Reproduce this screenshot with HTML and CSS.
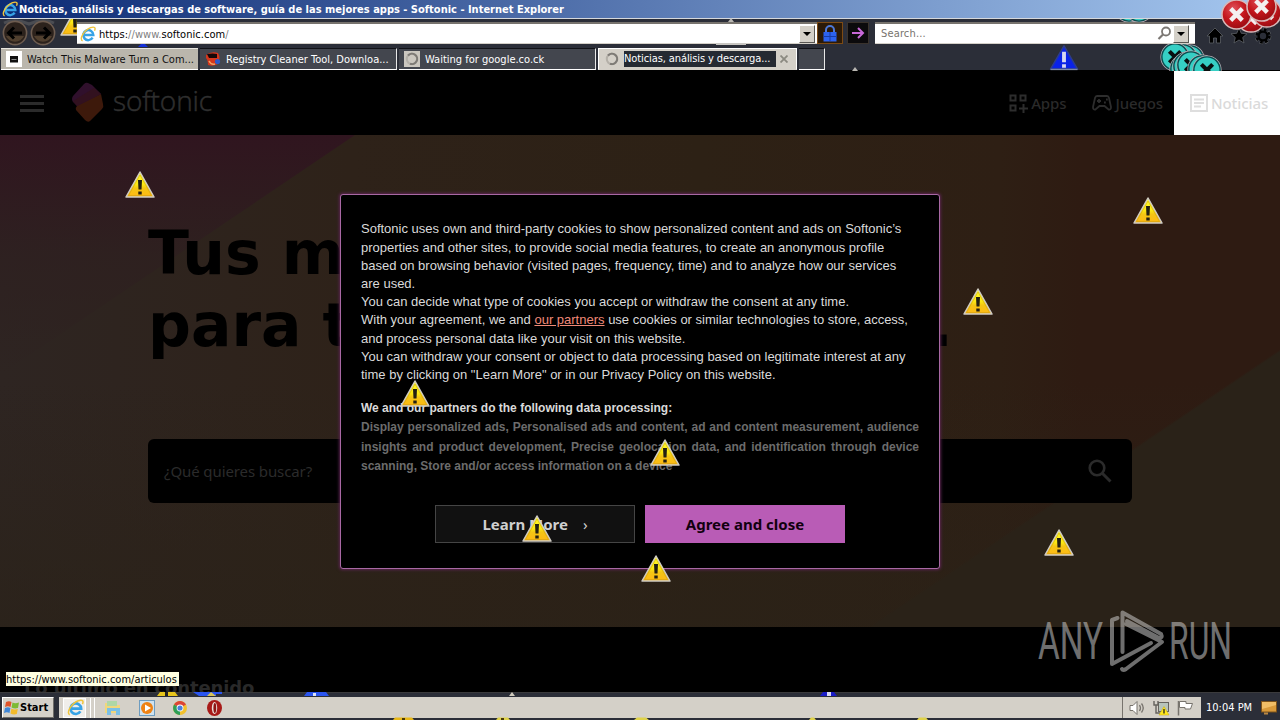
FILE: index.html
```html
<!DOCTYPE html>
<html lang="es">
<head>
    <meta charset="UTF-8">
    <meta name="viewport" content="width=device-width, initial-scale=1.0">
    <title>Noticias, análisis y descargas de software, guía de las mejores apps - Softonic</title>
    <link rel="stylesheet" href="styles.css">
</head>
<body>
    <!-- shared icons -->
    <svg class="defs" width="0" height="0">
        <defs>
            <linearGradient id="yellow" x1="0" y1="0" x2="0" y2="1">
                <stop offset="0" stop-color="#ffff30"/>
                <stop offset="0.5" stop-color="#fbe814"/>
                <stop offset="0.65" stop-color="#f4c614"/>
                <stop offset="1" stop-color="#ffb814"/>
            </linearGradient>
            <radialGradient id="red" cx="0.4" cy="0.3" r="0.8">
                <stop offset="0" stop-color="#e0525a"/>
                <stop offset="0.5" stop-color="#c4161c"/>
                <stop offset="1" stop-color="#8e0a10"/>
            </radialGradient>
            <symbol id="warn" viewBox="0 0 30 27">
                <path d="M15 1 L29 26 H1 Z" fill="url(#yellow)" stroke="#cfcbc3" stroke-width="1.5" stroke-linejoin="round"/>
                <path d="M15 4 L26.5 24.500 H3.500 Z" fill="none" stroke="#c99a10" stroke-width="0.5"/>
                <path d="M13 9 h4 l-.5 9.500 h-3 Z M13.300 20.500 h3.400 v3 h-3.400 Z" fill="#221f12"/>
            </symbol>
            <symbol id="warn-blue" viewBox="0 0 30 27">
                <path d="M15 1 L29 25 H1 Z" fill="#0a22e8" stroke="#2c3c8c" stroke-width="1.6" stroke-linejoin="round"/>
                <path d="M1 25.4 H29" stroke="#7c88a8" stroke-width="1.4"/>
                <path d="M13 7 h4 v11 h-4 Z M13 20 h4 v3.5 h-4 Z" fill="#d8d8f0"/>
            </symbol>
            <symbol id="error" viewBox="0 0 32 32">
                <circle cx="16" cy="16" r="15" fill="url(#red)" stroke="#d9b9b9" stroke-width="1.6"/>
                <path d="M10 10 L22 22 M22 10 L10 22" stroke="#f4f0f0" stroke-width="4.6"/>
            </symbol>
            <symbol id="error-teal" viewBox="0 0 32 32">
                <circle cx="16" cy="16" r="15" fill="#36cfc4" stroke="#b9a7ae" stroke-width="1.2"/>
                <circle cx="16" cy="16" r="14" fill="none" stroke="#0c4b4e" stroke-width="1.5"/>
                <path d="M10 10 L22 22 M22 10 L10 22" stroke="#0a1010" stroke-width="4.4"/>
            </symbol>
            <symbol id="ie" viewBox="0 0 16 16">
                <path d="M3.500 9 H13.300 A5 5 0 1 0 12.600 11.700" fill="none" stroke="#37a3e6" stroke-width="2.500"/>
                <path d="M2.600 14.800 C-1 13.500 3.500 4.600 10.600 1.700 C14.400 .2 16 1.800 14.500 4.800" fill="none" stroke="#efc53c" stroke-width="1.400"/>
            </symbol>
            <symbol id="spinner" viewBox="0 0 16 16">
                <circle cx="8" cy="8" r="5.2" fill="none" stroke="#b4b0a8" stroke-width="2"/>
                <path d="M4 4.500 a5.200 5.200 0 1 1 2 8.200" fill="none" stroke="#7e7b76" stroke-width="2"/>
            </symbol>
        </defs>
    </svg>

    <div class="screen">
        <div class="titlebar">
            <svg class="title-icon" viewBox="0 0 16 16"><use href="#ie"/></svg>
            <span class="title">Noticias, análisis y descargas de software, guía de las mejores apps - Softonic - Internet Explorer</span>
        </div>

        <div class="toolbar">
            <svg class="nav-buttons" width="58" height="29" viewBox="0 0 58 29">
                <path d="M4 4 Q15 -1 29 5 Q43 -1 54 4" fill="none" stroke="#4a4c52" stroke-width="3"/>
                <circle cx="15" cy="14" r="11.6" fill="#2c221c" stroke="#6d5c50" stroke-width="1.6"/>
                <circle cx="43" cy="14" r="11.6" fill="#2c221c" stroke="#6d5c50" stroke-width="1.6"/>
                <path d="M6 17 a10 10 0 0 0 18 0 Z M34 17 a10 10 0 0 0 18 0 Z" fill="#51402f"/>
                <path d="M22 14 H9 M14 8.5 L8.5 14 L14 19.5 M36 14 H49 M44 8.5 L49.5 14 L44 19.5" fill="none" stroke="#000" stroke-width="3"/>
            </svg>
            <div class="address">
                <svg class="icon16" viewBox="0 0 16 16"><use href="#ie"/></svg>
                <span class="url">https:<i>//www.</i>softonic.com<i>/</i></span>
                <span class="drop"></span>
            </div>
            <div class="tool-button lock">
                <svg width="14" height="17" viewBox="0 0 14 17">
                    <path d="M3 8 V5 a4 4 0 0 1 8 0 V8" fill="none" stroke="#4d78d8" stroke-width="2"/>
                    <rect x="0.5" y="7" width="13" height="9.5" fill="#2c63f0"/>
                    <path d="M0 11.5 H14 M7 7 V16" stroke="#173ca8"/>
                </svg>
            </div>
            <div class="tool-button go">
                <svg width="14" height="14" viewBox="0 0 14 14"><path d="M1 7 H12 M7 2 L12 7 L7 12" fill="none" stroke="#c868d8" stroke-width="2"/></svg>
            </div>
            <div class="search">
                <span>Search...</span>
                <svg width="15" height="15" viewBox="0 0 15 15"><circle cx="9" cy="5.5" r="4" fill="none" stroke="#7b7773" stroke-width="1.8"/><path d="M6 8.5 L1.5 13" stroke="#7b7773" stroke-width="2.2"/></svg>
                <span class="drop"></span>
            </div>
            <svg class="window-tools" width="66" height="18" viewBox="0 0 66 18">
                <g fill="#000" stroke="#5c5f64" stroke-width="0.8">
                    <path d="M9 1 L17 9 H14.5 V16 H10.5 V11 H7.5 V16 H3.5 V9 H1 Z"/>
                    <path d="M33 1 L35.3 6.3 L41 6.8 L36.7 10.5 L38 16 L33 13 L28 16 L29.300 10.500 L25 6.800 L30.700 6.300 Z"/>
                </g>
                <circle cx="57" cy="9" r="6.800" fill="none" stroke="#5c5f64" stroke-width="3" stroke-dasharray="3.400 1.940"/>
                <circle cx="57" cy="9" r="6.200" fill="none" stroke="#000" stroke-width="3" stroke-dasharray="2.600 2.270"/>
                <circle cx="57" cy="9" r="4.400" fill="none" stroke="#000" stroke-width="2.400"/>
            </svg>
        </div>

        <div class="tabs">
            <div class="tab light">
                <svg class="icon16" viewBox="0 0 16 16"><rect width="16" height="16" fill="#fff"/><rect x="4" y="5" width="8" height="6.500" fill="#111"/><path d="M5.500 8.500 h5" stroke="#888"/></svg>
                <span>Watch This Malware Turn a Com...</span>
            </div>
            <div class="tab dark">
                <svg class="icon16" viewBox="0 0 16 16"><path d="M1 4 Q6 0 13 2 Q16 7 13 13 Q8 16 3 14 Q3 9 1 7 Z" fill="#d4361c"/><path d="M2 3 Q8 2 12 3 V7 H4 Z" fill="#160808"/><path d="M4 10 q2 4 6 3" stroke="#f0a060" stroke-width="1.500" fill="none"/><circle cx="12.500" cy="10.500" r="2.600" fill="#2c58c8"/></svg>
                <span>Registry Cleaner Tool, Downloa...</span>
            </div>
            <div class="tab dark">
                <svg class="icon16 boxed" viewBox="0 0 16 16"><use href="#spinner"/></svg>
                <span>Waiting for google.co.ck</span>
            </div>
            <div class="tab active">
                <svg class="icon16" viewBox="0 0 16 16"><use href="#spinner"/></svg>
                <span class="active-title">Noticias, análisis y descarga...</span>
                <svg class="close" width="8" height="8" viewBox="0 0 8 8"><path d="M0.500 0.500 L7.500 7.500 M7.500 0.500 L0.500 7.500" stroke="#8b8980" stroke-width="1.800"/></svg>
            </div>
            <div class="tab dark new"></div>
        </div>

        <div class="page">
            <div class="header">
                <div class="menu"><b></b><b></b><b></b></div>
                <svg class="logo" width="34" height="42" viewBox="0 0 34 42">
                    <path d="M17 1 Q15 0 13 2 L2 14 Q0 17 2 20 L8 26 L30 12 L21 3 Z" fill="#30102c"/>
                    <path d="M30 12 L32 22 Q33 25 31 27 L19 39 Q17 41 14 38 L5 28 Q4 26 6 24 Z" fill="#3d190b"/>
                    <path d="M30 12 L6 24 L2 19 L23 6 Z" fill="#32111f"/>
                </svg>
                <span class="brand">softonic</span>
                <div class="nav">
                    <a class="apps">
                        <svg width="19" height="19" viewBox="0 0 19 19" fill="none" stroke="#2d2d2d" stroke-width="2"><path d="M1.500 1.500 h5 v5 h-5 Z M11.500 1.500 h5 v5 h-5 Z M1.500 11.500 h5 v5 h-5 Z M14.500 10 v9 M10 14.500 h9"/></svg>
                        <span>Apps</span>
                    </a>
                    <a class="games">
                        <svg width="20" height="16" viewBox="0 0 20 16" fill="none" stroke="#2d2d2d" stroke-width="1.800"><path d="M5 1 H15 Q16.500 1 17 3 L19 12 Q19 15 16.500 14.500 L12.500 11 H7.500 L3.500 14.500 Q1 15 1 12 L3 3 Q3.500 1 5 1 Z M7 4 V8 M5 6 H9 M12 7.500 h1.800 M14 4.500 h1.800"/></svg>
                        <span>Juegos</span>
                    </a>
                    <a class="news">
                        <svg width="18" height="18" viewBox="0 0 18 18" fill="none" stroke="#dedede" stroke-width="2"><path d="M1 1 H17 V17 H1 Z M4 5.500 H14 M4 9 H14 M4 12.500 H11"/></svg>
                        <span>Noticias</span>
                    </a>
                </div>
            </div>

            <div class="hero">
                <h1>Tus m<br>para t<span>.</span></h1>
                <div class="hero-search">
                    <span>¿Qué quieres buscar?</span>
                    <svg width="24" height="24" viewBox="0 0 24 24" fill="none" stroke="#2b2b2b"><circle cx="9" cy="9" r="7.300" stroke-width="2.600"/><path d="M14 14 L22.500 22.500" stroke-width="3"/></svg>
                </div>
            </div>
            <div class="latest"><h2>Lo último en contenido</h2></div>

            <div class="modal">
                <p class="intro">Softonic uses own and third-party cookies to show personalized content and ads on Softonic’s<br>properties and other sites, to provide social media features, to create an anonymous profile<br>based on browsing behavior (visited pages, frequency, time) and to analyze how our services<br>are used.<br>You can decide what type of cookies you accept or withdraw the consent at any time.<br>With your agreement, we and <a>our partners</a> use cookies or similar technologies to store, access,<br>and process personal data like your visit on this website.<br>You can withdraw your consent or object to data processing based on legitimate interest at any<br>time by clicking on "Learn More" or in our Privacy Policy on this website.</p>
                <p class="processing"><strong>We and our partners do the following data processing:</strong></p>
                <p class="purposes">Display personalized ads, Personalised ads and content, ad and content measurement, audience insights and product development, Precise geolocation data, and identification through device scanning, Store and/or access information on a device</p>
                <div class="buttons">
                    <button class="learn"><span>Learn More</span><em>›</em></button>
                    <button class="agree"><span>Agree and close</span></button>
                </div>
            </div>
            <div class="status">https://www.softonic.com/articulos</div>
        </div>

        <div class="taskbar">
            <div class="start">
                <svg width="16" height="16" viewBox="0 0 16 16"><path d="M2 2 Q5 .5 7.500 2 L6.500 7 Q4 5.500 1 7 Z" fill="#e0532a"/><path d="M8.500 2.500 Q11 4 15 2.500 L14 8 Q10.500 9 7.500 7.500 Z" fill="#7dba35"/><path d="M1 8 Q4 6.500 6.400 8 L5.500 13 Q3 11.500 0 13 Z" fill="#3f86d8"/><path d="M7.400 8.500 Q10 10 13.800 9 L12.800 14 Q9.500 15 6.500 13.500 Z" fill="#f4bb2c"/></svg>
                <span>Start</span>
            </div>
            <div class="tasks">
                <div class="task-ie"><svg width="17" height="17" viewBox="0 0 16 16"><use href="#ie"/></svg></div>
                <svg class="t-files" width="18" height="16" viewBox="0 0 18 16"><path d="M1 3 H6 L8 5 H16 V13 H1 Z" fill="#f0d77c"/><path d="M3 1 H13 V6 H3 Z" fill="#aed7a6"/><path d="M3 8 H16 V15 H12 V11 H7 V15 H3 Z" fill="#7bbfe6"/></svg>
                <svg class="t-media" width="16" height="16" viewBox="0 0 16 16"><rect x="0.500" y="0.500" width="15" height="15" fill="#cfe2ef" stroke="#6d9cc0"/><circle cx="8" cy="8" r="6" fill="#ee8214"/><path d="M6 4.500 L12 8 L6 11.500 Z" fill="#fff"/></svg>
                <svg class="t-chrome" width="14" height="14" viewBox="0 0 14 14"><circle cx="7" cy="7" r="7" fill="#f2c12e"/><path d="M7 7 L1 3.500 A7 7 0 0 1 13 3.500 Z" fill="#db4437"/><path d="M7 7 L1 3.500 A7 7 0 0 0 7 14 Z" fill="#2f9e58"/><circle cx="7" cy="7" r="3.400" fill="#fff"/><circle cx="7" cy="7" r="2.600" fill="#4a80dc"/></svg>
                <svg class="t-opera" width="15" height="16" viewBox="0 0 15 16"><ellipse cx="7.500" cy="8" rx="7.500" ry="8" fill="#a81a18"/><ellipse cx="7.500" cy="8" rx="2.700" ry="6" fill="#eadfdb"/><ellipse cx="7.800" cy="8" rx="1.400" ry="5" fill="#8d1514"/></svg>
            </div>
            <div class="tray">
                <svg width="17" height="16" viewBox="0 0 17 16"><path d="M1 5.500 H4 L8 1.500 V14.500 L4 10.500 H1 Z" fill="#fff" stroke="#77736d"/><path d="M10.500 5 Q12.500 8 10.500 11 M12.500 3.500 Q16 8 12.500 12.500" fill="none" stroke="#77736d" stroke-width="1.300"/></svg>
                <svg width="17" height="16" viewBox="0 0 17 16"><rect x="5.500" y="2.500" width="10" height="9" fill="#b8c4bc" stroke="#66635e"/><path d="M1 1 V5 H5 V1 M3 5 V13 H7" fill="none" stroke="#66635e" stroke-width="1.400"/><path d="M11 6.500 L16 15 H6 Z" fill="#ffe81c" stroke="#c7a80a" stroke-width="0.500"/><path d="M11 9 V13.500" stroke="#222" stroke-width="1.300"/></svg>
                <svg width="17" height="16" viewBox="0 0 17 16"><path d="M1.500 1 V15.500" stroke="#77736d" stroke-width="1.500"/><path d="M2.500 1.500 H9 V3.500 H15.500 L13.500 9 H8 V7.500 H2.500 Z" fill="#fff" stroke="#77736d"/></svg>
            </div>
            <div class="clock">
                <span>10:04 PM</span>
                <svg width="16" height="14" viewBox="0 0 16 14"><rect x="0.500" y="0.500" width="15" height="10.500" fill="#d99a3a" stroke="#7d5219"/><path d="M1 1 H15 V4 L1 8 Z" fill="#f0bd66"/><path d="M3 12.500 H7" stroke="#bb8843" stroke-width="2"/></svg>
            </div>
        </div>

        <!-- icons drawn by the malware all over the desktop -->
        <svg class="overlay" width="1280" height="720" viewBox="0 0 1280 720">
            <defs>
                <clipPath id="c-toolbar"><rect x="60" y="19" width="17" height="20"/></clipPath>
                <clipPath id="c-teal"><path d="M1120 44 H1280 V71 H1120 Z"/></clipPath>
                <clipPath id="c-gap"><path d="M1100 19 H1170 V22 H1100 Z"/></clipPath>
                <clipPath id="c-top"><path d="M0 692 H1280 V696 H0 Z"/></clipPath>
                <clipPath id="c-bottom"><path d="M0 716 H1280 V720 H0 Z"/></clipPath>
            </defs>
            <g clip-path="url(#c-toolbar)"><use href="#warn" x="60" y="9" width="30" height="27"/></g>
            <path d="M138 47 L141 44 H145 L148 47 Z" fill="#1530d8"/>
            <path d="M728 22 L731 18 L734 22 Z M852 71 L855 67 L858 71 Z" fill="#b9b7b2"/>
            <path d="M716 44 H746" stroke="#c8c6c2" stroke-width="2"/>
            <g clip-path="url(#c-gap)">
                <use href="#error-teal" x="1114" y="-7" width="30" height="30"/>
                <use href="#error-teal" x="1124" y="-7" width="30" height="30"/>
            </g>
            <use href="#warn-blue" x="1049" y="45" width="30" height="26"/>
            <g clip-path="url(#c-teal)">
                <use href="#error-teal" x="1175" y="44" width="30" height="30"/>
                <use href="#error-teal" x="1168" y="43" width="30" height="30"/>
                <use href="#error-teal" x="1160" y="42" width="30" height="30"/>
                <use href="#error-teal" x="1169" y="54" width="30" height="30"/>
                <use href="#error-teal" x="1172" y="51" width="30" height="30"/>
                <use href="#error-teal" x="1176" y="50" width="30" height="30"/>
                <use href="#error-teal" x="1187" y="54" width="30" height="30"/>
                <use href="#error-teal" x="1192" y="55" width="30" height="30"/>
            </g>
            <use href="#error" x="1236" y="3" width="30" height="30"/>
            <use href="#error" x="1252" y="-2" width="30" height="30"/>
            <use href="#error" x="1221" y="-1" width="31" height="31"/>
            <use href="#error" x="1246" y="-9" width="31" height="31"/>

            <use href="#warn" x="125" y="171" width="30" height="27"/>
            <use href="#warn" x="1133" y="197" width="30" height="27"/>
            <use href="#warn" x="963" y="288" width="30" height="27"/>
            <use href="#warn" x="400" y="380" width="30" height="27"/>
            <use href="#warn" x="650" y="439" width="30" height="27"/>
            <use href="#warn" x="522" y="515" width="30" height="27"/>
            <use href="#warn" x="641" y="555" width="30" height="27"/>
            <use href="#warn" x="1044" y="529" width="30" height="27"/>

            <g clip-path="url(#c-top)">
                <path d="M157 696 L160 692 H175 L178 696 Z" fill="#e6c41c"/>
                <path d="M165 692 h3 v4 h-3 Z" fill="#222"/>
                <path d="M193 692 H222 V694 H216 V696 H199 Z" fill="#2a55f0"/>
                <path d="M207 696 L211 692 L216 696 Z" fill="#d8c45a"/>
                <path d="M304 696 L307 692 H326 L329 696 Z" fill="#2a55f0"/>
                <path d="M313 693 h3 v3 h-3 Z" fill="#dbe3f5"/>
                <path d="M509 696 L512 692 L515 696 Z" fill="#cfcabc"/>
                <path d="M820 696 L823 692 H834 L837 696 Z" fill="#1a1cc8"/>
                <path d="M827 692 h4 v4 h-4 Z" fill="#d8d8f4"/>
            </g>
            <g clip-path="url(#c-bottom)">
                <path d="M395 717.500 H412 L414 720 H393 Z" fill="#e8b818"/>
                <path d="M498 717.500 H508 L510 720 H496 Z M637 717.500 H646 L649 720 H634 Z M811 717.500 H814 L816 720 H809 Z M919 717.500 H926 L928 720 H917 Z" fill="#dfd24a"/>
                <path d="M402 718 h3 v2 h-3 Z M501 718 h3 v2 h-3 Z" fill="#4a3a08"/>
            </g>

            <g class="watermark">
                <text x="1038" y="659" textLength="65" lengthAdjust="spacingAndGlyphs">ANY</text>
                <text x="1169" y="659" textLength="63" lengthAdjust="spacingAndGlyphs">RUN</text>
                <path d="M1122.500 652 V612.500 L1161 634 Q1163 638 1159 638 L1127 621 M1117.500 618 L1112 620 V664 L1151 643 M1122 669 Q1123 671 1126 669 L1162 642 L1126 624"/>
            </g>
        </svg>
    </div>
</body>
</html>
```
FILE: styles.css
```css
* {
    box-sizing: border-box;
}

body {
    margin: 0;
    background: #000;
    font-family: "DejaVu Sans Condensed", "DejaVu Sans", sans-serif;
    font-size: 11px;
}

svg {
    display: block;
    flex-shrink: 0;
}

.defs {
    position: absolute;
}

.screen {
    position: relative;
    width: 1280px;
    height: 720px;
    overflow: hidden;
    display: flex;
    flex-direction: column;
    background: #2b2e38;
    white-space: nowrap;
}

.titlebar {
    height: 19px;
    display: flex;
    align-items: center;
    gap: 1px;
    padding-left: 2px;
    background: linear-gradient(90deg, #0c2a74, #a6c8f0);
    border-bottom: 1px solid #d5d8dc;
    color: #fff;
    font-weight: bold;
}

.title-icon, .icon16 {
    width: 16px;
    height: 16px;
}

.toolbar {
    height: 29px;
    display: flex;
    align-items: flex-start;
}

.address, .search {
    display: flex;
    align-items: center;
    margin-top: 3px;
    height: 22px;
    background: #fff;
    border-top: 2px solid #77736d;
    border-bottom: 1px solid #d4d0c8;
}

.address {
    width: 740px;
    margin-left: 19px;
    padding: 0 2px 0 3px;
    gap: 3px;
}

.url {
    flex: 1;
    padding-top: 1px;
    letter-spacing: 0.05px;
    color: #000;
}

.url i {
    font-style: normal;
    color: #808080;
}

.drop {
    width: 16px;
    height: 18px;
    display: flex;
    align-items: center;
    justify-content: center;
    background: #d4d0c8;
    border: 1px solid #fff;
    border-right-color: #5a5854;
    border-bottom-color: #5a5854;
}

.drop::after {
    content: "";
    border: 4px solid transparent;
    border-top-color: #000;
    border-bottom: 0;
}

.tool-button {
    margin-top: 3px;
    height: 22px;
    display: flex;
    align-items: center;
    justify-content: center;
}

.lock {
    width: 26px;
    background: #2b1a08;
    border: 1px solid #7c4a14;
}

.go {
    width: 22px;
    margin-left: 4px;
    background: #0b0a0c;
    border: 1px solid #39322c;
}

.search {
    width: 320px;
    margin-left: 6px;
    padding: 0 6px 0 6px;
    color: #77736d;
}

.search span:first-child {
    flex: 1;
    letter-spacing: 0.15px;
}

.search .drop {
    margin-left: 1px;
}

.window-tools {
    margin: 8px 0 0 11px;
}

.tabs {
    height: 23px;
    display: flex;
    gap: 2px;
    padding-left: 1px;
    border-bottom: 1px solid #000;
}

.tab {
    width: 197px;
    height: 22px;
    display: flex;
    align-items: center;
    padding-left: 5px;
    gap: 5px;
    border-bottom: 1px solid #fff;
    color: #fff;
}

.light {
    background: #bab6ac;
    border-top: 1px solid #e8e6e0;
    color: #111;
}

.dark {
    background: #43464e;
    border-top: 1px solid #111217;
    border-right: 1px solid #e8e8e8;
}

.boxed {
    background: #cbc7bf;
}

.active {
    width: 199px;
    padding-left: 5px;
    gap: 4px;
    background: #d4d0c8;
    border: 1px solid #fff;
    border-bottom-color: #d4d0c8;
}

.active-title {
    width: 152px;
    height: 16px;
    line-height: 16px;
    letter-spacing: -0.1px;
    background: #252a32;
}

.close {
    margin-left: 0;
}

.new {
    width: 26px;
}

.page {
    position: relative;
    height: 621px;
    overflow: hidden;
    background: #000;
}

.header {
    height: 64px;
    display: flex;
    align-items: center;
    padding-left: 20px;
}

.menu {
    width: 24px;
    height: 17px;
    display: flex;
    flex-direction: column;
    justify-content: space-between;
}

.menu b {
    height: 3px;
    background: #2b2b2b;
}

.logo {
    margin-left: 27px;
}

.brand {
    margin: -6px 0 0 8px;
    font: 300 28px "Open Sans", sans-serif;
    letter-spacing: -0.1px;
    color: #2f2f2f;
    -webkit-text-stroke: 0.5px #2f2f2f;
}

.nav {
    flex: 1;
    align-self: stretch;
    display: flex;
    justify-content: flex-end;
    font: 500 15px "Noto Sans", sans-serif;
    letter-spacing: -0.1px;
    color: #2a2a2a;
}

.nav a {
    display: flex;
    align-items: center;
    gap: 3px;
}

.apps {
    margin-right: 26px;
}

.games {
    margin-right: 11px;
}

.nav .news {
    width: 106px;
    padding-left: 16px;
    background: #fff;
    color: #dadada;
}

.hero {
    height: 492px;
    padding: 82px 148px 0;
    background:
        linear-gradient(146deg, transparent 79.5%, #2a2218 79.7%),
        linear-gradient(180deg, transparent 50%, rgba(42, 34, 24, 0.7)),
        linear-gradient(90deg, #2e2522 0, #2e2219 350px, #2d2115 700px, #2e1f14 1000px, #2e1b12 1080px, #2e1b12);
    position: relative;
}

/* purple corner */
.hero::before {
    content: "";
    position: absolute;
    left: 0;
    top: 0;
    width: 355px;
    height: 240px;
    background: linear-gradient(180deg, #30151f, rgba(46, 31, 32, 0.7) 50%, rgba(46, 36, 33, 0));
    clip-path: polygon(0 0, 100% 0, 0 100%);
}

h1 {
    position: relative;
    margin: 0;
    font: bold 60px/72px "DejaVu Sans", sans-serif;
    color: #000;
}

h1 span {
    margin-left: 579px;
}

.hero-search {
    height: 64px;
    margin: 78px 0 0;
    padding: 0 20px 0 16px;
    display: flex;
    align-items: center;
    justify-content: space-between;
    background: #000;
    border-radius: 6px;
    font: 15px "Noto Sans", sans-serif;
    letter-spacing: -0.1px;
    color: #2b2b2b;
}

.latest {
    padding: 50px 0 0 24px;
}

.latest h2 {
    margin: 0;
    font: bold 18px/22px "DejaVu Sans", sans-serif;
    letter-spacing: -0.15px;
    color: #292929;
}

.modal {
    position: absolute;
    left: 340px;
    top: 123px;
    width: 600px;
    height: 375px;
    padding: 25.3px 20px 0;
    background: #000;
    border: 1px solid #a868a4;
    border-radius: 3px;
    box-shadow: 0 0 3px 1px #5a2450;
    font: 13px/18.2px "Liberation Sans", Arial, sans-serif;
    color: #dadada;
}

.modal p {
    margin: 0;
}

.modal a {
    color: #f08a78;
    text-decoration: underline;
}

.modal .processing {
    margin-top: 15px;
    font-size: 12px;
}

.modal .purposes {
    width: 558px;
    padding-top: 0.7px;
    font-size: 12px;
    font-weight: bold;
    line-height: 19.5px;
    white-space: normal;
    text-align: justify;
    color: #6c6c6c;
}

.buttons {
    display: flex;
    justify-content: center;
    gap: 10px;
    margin-top: 28px;
}

.buttons button {
    width: 200px;
    height: 38px;
    padding: 0;
    border: 0;
    font: bold 15px "Noto Sans", sans-serif;
}

.buttons .learn {
    display: flex;
    align-items: center;
    justify-content: center;
    gap: 15px;
    background: #111;
    border: 1px solid #454545;
    color: #cfcfcf;
}

.learn em {
    font-style: normal;
    font-weight: normal;
}

.buttons .agree {
    background: #b95cb6;
    color: #12000f;
}

.status {
    position: absolute;
    left: 6px;
    top: 601px;
    height: 14px;
    line-height: 15px;
    width: 173px;
    background: #ffffe1;
    color: #000;
}

.taskbar {
    height: 28px;
    display: flex;
    padding: 4px 2px 2px;
    background: #2b2e38;
    border-top: 1px solid #3a3a3c;
}

.start {
    width: 52px;
    display: flex;
    align-items: center;
    padding-left: 1px;
    background: #d4d0c8;
    border: 1px solid #fff;
    border-right-color: #6e6c68;
    border-bottom-color: #6e6c68;
    font-weight: bold;
    color: #000;
}

.tasks {
    flex: 1;
    margin-left: 5px;
    display: flex;
    align-items: center;
    padding-left: 4px;
    background: #d4d0c8;
}

.task-ie {
    width: 23px;
    height: 20px;
    padding-left: 3px;
    background: #f0eeea;
    border: 1px solid #fff;
    box-shadow: 4px 0 #d4d0c8, 5px 0 #fff, 8px 0 #d4d0c8, 9px 0 #fff;
}

.t-files {
    margin-left: 18px;
}

.t-media {
    margin-left: 17px;
}

.t-chrome {
    margin-left: 18px;
}

.t-opera {
    margin-left: 20px;
}

.tray {
    width: 79px;
    display: flex;
    align-items: center;
    gap: 7px;
    padding-left: 6px;
    background: #d4d0c8;
    border-left: 1px solid #77736d;
}

.clock {
    width: 77px;
    display: flex;
    align-items: center;
    gap: 9px;
    padding-left: 5px;
    color: #fff;
}

.overlay {
    position: absolute;
    left: 0;
    top: 0;
}

.watermark {
    opacity: 0.55;
    font: 52px Roboto, "Liberation Sans", sans-serif;
}

.watermark text {
    fill: #c8c8c8;
}

.watermark path {
    fill: none;
    stroke: #c8c8c8;
    stroke-width: 4;
    stroke-linejoin: round;
    stroke-linecap: round;
}
```
